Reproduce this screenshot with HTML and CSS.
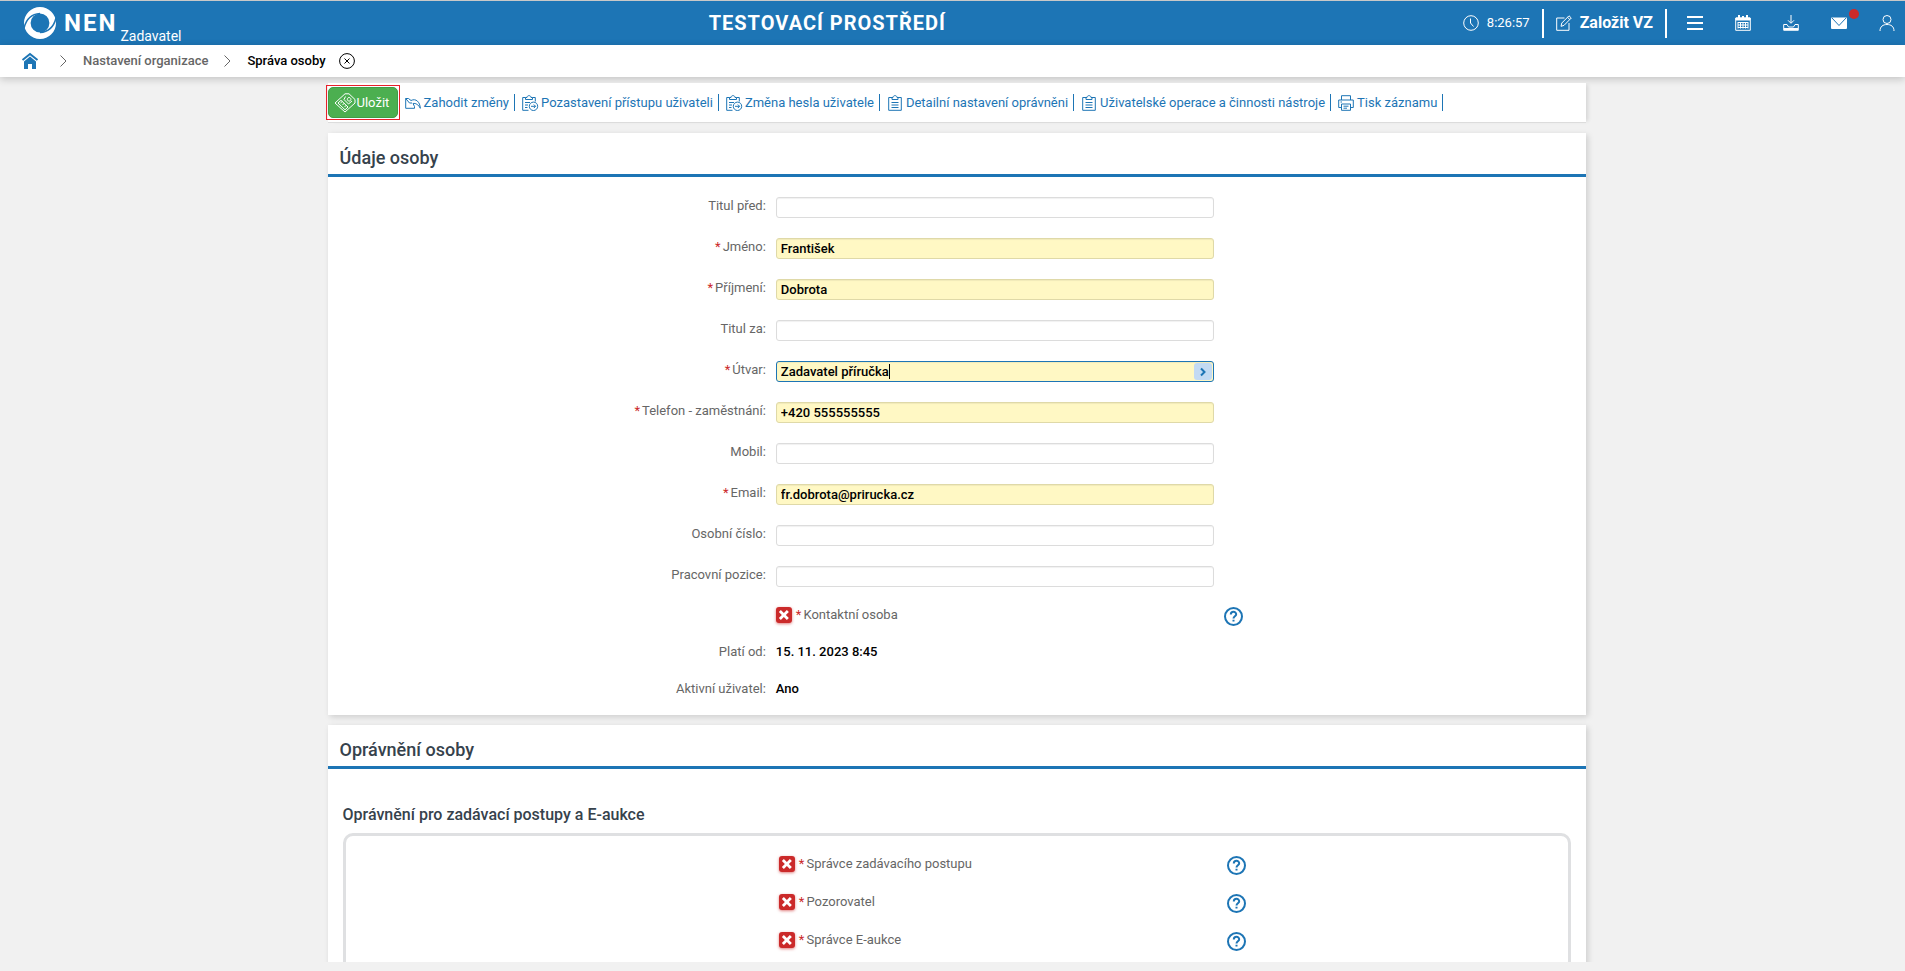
FILE: index.html
```html
<!DOCTYPE html>
<html lang="cs">
<head>
  <meta charset="UTF-8">
  <title>Správa osoby - NEN</title>
  <meta name="viewport" content="width=device-width, initial-scale=1.0">
  <link rel="stylesheet" href="styles.css">
</head>
<body>

  <header class="top-bar">
    <div class="brand">
      <svg class="brand-ring" viewBox="0 0 32 32">
        <circle cx="16" cy="16" r="12.700" fill="none" stroke="#fff" stroke-width="6.600"/>
        <path fill="none" stroke="#1d75b5" stroke-width="1.500" d="M0 21C2 13 7 7 16 6.500M32 11C30 19 25 25 16 25.500"/>
      </svg>
      <span class="brand-name">NEN</span>
      <span class="brand-role">Zadavatel</span>
    </div>
    <div class="env">TESTOVACÍ PROSTŘEDÍ</div>
    <div class="top-tools">
      <div class="clock">
        <svg class="icon" viewBox="0 0 16 16"><circle cx="8" cy="8" r="7.300"/><path d="M7.500 3.500V8L10.500 11.500"/></svg>
        <span>8:26:57</span>
      </div>
      <button class="new-vz">
        <svg class="icon" viewBox="0 0 16 16"><path d="M8.500 3H.700V15.300H13V8M5 11.300L5.800 8L13 .800L15.300 3L8 10.400ZM11.500 2.300L13.800 4.500"/></svg>
        Založit VZ
      </button>
      <nav class="top-icons">
        <button aria-label="Menu"><svg class="icon" viewBox="0 0 16 16"><path stroke-width="2" d="M0 2H16M0 8H16M0 14H16"/></svg></button>
        <button aria-label="Kalendář"><svg class="icon" viewBox="0 0 16 16"><path d="M.700 3H15.300V15.300H.700ZM3 7.500H13M3 10H13M3 12.500H13M3 7V13.500M5.500 7V13.500M8 7V13.500M10.500 7V13.500M13 7V13.500"/><path fill="#fff" d="M1 3H15V5H1Z"/><path stroke-width="2" d="M4 0V4M8 1V4M12 0V4"/></svg></button>
        <button aria-label="Stažené soubory"><svg class="icon" viewBox="0 0 16 16"><path d="M8 0V8M5 5.300L8 8.300L11 5.300M.700 9.500H4L5.500 12H10.500L12 9.500H15.300V15.300H.700Z"/><path stroke-width="2" d="M1 14H15"/></svg></button>
        <button class="mail" aria-label="Zprávy"><svg class="icon" viewBox="0 0 16 16"><rect x="0" y="2.500" width="16" height="11.500" rx="1" fill="#fff" stroke="none"/><path stroke="#1d75b5" d="M1 3L8 10.500L15 3"/></svg><span class="dot"></span></button>
        <button aria-label="Uživatel"><svg class="icon" viewBox="0 0 16 16"><circle cx="8" cy="4.500" r="4"/><path d="M1 16C1 11.500 4 9.500 8 9.500S15 11.500 15 16"/></svg></button>
      </nav>
    </div>
  </header>

  <nav class="breadcrumb">
    <a href="#" class="home" aria-label="Domů">
      <svg viewBox="0 0 16 16"><path fill="none" stroke="#1d75b5" stroke-width="2" d="M.500 7L8 1L15.500 7"/><path fill="#1d75b5" d="M2 8.500L8 3.500L14 8.500V16H10V11H6V16H2Z"/></svg>
    </a>
    <svg class="sep" viewBox="0 0 7 12"><path d="M.500 .500L6 6L.500 11.500"/></svg>
    <a href="#">Nastavení organizace</a>
    <svg class="sep" viewBox="0 0 7 12"><path d="M.500 .500L6 6L.500 11.500"/></svg>
    <span class="current">Správa osoby</span>
    <button class="close" aria-label="Zavřít">
      <svg viewBox="0 0 16 16"><circle cx="8" cy="8" r="7.400"/><path d="M5.500 5.500L10.500 10.500M10.500 5.500L5.500 10.500"/></svg>
    </button>
  </nav>

  <main class="page">
    <div class="toolbar">
      <button class="save">
        <svg viewBox="0 0 22 20"><path d="M1 10L11 .800H15L21 6.500V10L11 19ZM4 10L7 7.300L14 14L11 16.800ZM11.500 3.500L10 6.500L14.500 11L18 8M15 4.500A1.800 1.800 0 1 0 15.200 4.500M6.500 10L8.500 8.300M8.500 12L10.500 10M10.500 14L12.500 12"/></svg>
        Uložit
      </button>
      <button class="tool">
        <svg class="icon" viewBox="0 0 16 16"><path d="M3.500 3.500H.700V13.300H9.500V11.500M.700 3.500L4.500 8H7M3.500 3.500L6 5.500C11 3 15 7 15.300 13.300C13.500 9.500 10.500 8 8 8.500L9.500 11.500"/></svg>
        Zahodit změny
      </button>
      <button class="tool">
        <svg class="icon" viewBox="0 0 16 16"><path d="M6.500 15.300H.700V2.500H3.500M10.500 2.500H13.300V6.500M3.500 4.500V2.500H5C5 0 9 0 9 2.500H10.500V4.500ZM3 7.500H8M3 10H6M3 12.500H5.500"/><circle cx="11.500" cy="11.300" r="4.200"/><path d="M9 11.300H13.500M11.800 9.500L13.600 11.300L11.800 13.100"/></svg>
        Pozastavení přístupu uživateli
      </button>
      <button class="tool">
        <svg class="icon" viewBox="0 0 16 16"><path d="M6.500 15.300H.700V2.500H3.500M10.500 2.500H13.300V6.500M3.500 4.500V2.500H5C5 0 9 0 9 2.500H10.500V4.500ZM3 7.500H8M3 10H6M3 12.500H5.500"/><circle cx="11.500" cy="11.300" r="4.200"/><path d="M9 11.300H13.500M11.800 9.500L13.600 11.300L11.800 13.100"/></svg>
        Změna hesla uživatele
      </button>
      <button class="tool">
        <svg class="icon" viewBox="0 0 16 16"><path d="M5 2.500H1.700V15.300H14.300V2.500H11M5 4.500V2.500H6C6 0 10 0 10 2.500H11V4.500ZM4.500 7.500H11.500M4.500 10H11.500M4.500 12.500H11.500"/></svg>
        Detailní nastavení oprávněni
      </button>
      <button class="tool">
        <svg class="icon" viewBox="0 0 16 16"><path d="M5 2.500H1.700V15.300H14.300V2.500H11M5 4.500V2.500H6C6 0 10 0 10 2.500H11V4.500ZM4.500 7.500H11.500M4.500 10H11.500M4.500 12.500H11.500"/></svg>
        Uživatelské operace a činnosti nástroje
      </button>
      <button class="tool">
        <svg class="icon" viewBox="0 0 16 16"><path d="M3.500 5V.700H12.500V5M3.500 12.500H.700V5H15.300V12.500H12.500M3.500 9H12.500V15.300H3.500ZM5.500 11.200H10.500M5.500 13.200H9M2.500 7H4"/></svg>
        Tisk záznamu
      </button>
    </div>

    <section class="card">
      <h2>Údaje osoby</h2>
      <form class="form">
        <div class="row">
          <label for="titulPred">Titul před:</label>
          <input type="text" id="titulPred">
        </div>
        <div class="row">
          <label for="jmeno"><i>*</i>Jméno:</label>
          <input type="text" id="jmeno" class="required" value="František">
        </div>
        <div class="row">
          <label for="prijmeni"><i>*</i>Příjmení:</label>
          <input type="text" id="prijmeni" class="required" value="Dobrota">
        </div>
        <div class="row">
          <label for="titulZa">Titul za:</label>
          <input type="text" id="titulZa">
        </div>
        <div class="row">
          <label for="utvar"><i>*</i>Útvar:</label>
          <div class="lookup">
            <input type="text" id="utvar" class="required active" value="Zadavatel příručka">
            <span class="caret"></span>
            <button type="button" aria-label="Vybrat útvar"><svg viewBox="0 0 6 8"><path d="M1 .500L4.500 4L1 7.500"/></svg></button>
          </div>
        </div>
        <div class="row">
          <label for="telefon"><i>*</i>Telefon - zaměstnání:</label>
          <input type="text" id="telefon" class="required" value="+420 555555555">
        </div>
        <div class="row">
          <label for="mobil">Mobil:</label>
          <input type="text" id="mobil">
        </div>
        <div class="row">
          <label for="email"><i>*</i>Email:</label>
          <input type="text" id="email" class="required" value="fr.dobrota@prirucka.cz">
        </div>
        <div class="row">
          <label for="cislo">Osobní číslo:</label>
          <input type="text" id="cislo">
        </div>
        <div class="row">
          <label for="pozice">Pracovní pozice:</label>
          <input type="text" id="pozice">
        </div>
        <div class="row check-row">
          <div class="check">
            <input type="checkbox" id="kontaktni">
            <label for="kontaktni"><i>*</i>Kontaktní osoba</label>
          </div>
          <button type="button" class="help" aria-label="Nápověda"><svg viewBox="0 0 19 19"><circle cx="9.500" cy="9.500" r="8.500"/><path d="M6.800 7.500C6.800 4 12.200 4 12.200 7.300C12.200 9.300 9.500 9.300 9.500 11.500M9.500 12.800V14.600"/></svg></button>
        </div>
        <div class="row">
          <span class="label">Platí od:</span>
          <span class="value">15. 11. 2023 8:45</span>
        </div>
        <div class="row">
          <span class="label">Aktivní uživatel:</span>
          <span class="value">Ano</span>
        </div>
      </form>
    </section>

    <section class="card">
      <h2>Oprávnění osoby</h2>
      <div class="group">
        <h3>Oprávnění pro zadávací postupy a E-aukce</h3>
        <div class="group-box">
          <div class="row check-row">
            <div class="check">
              <input type="checkbox" id="spravcePostupu">
              <label for="spravcePostupu"><i>*</i>Správce zadávacího postupu</label>
            </div>
            <button type="button" class="help" aria-label="Nápověda"><svg viewBox="0 0 19 19"><circle cx="9.500" cy="9.500" r="8.500"/><path d="M6.800 7.500C6.800 4 12.200 4 12.200 7.300C12.200 9.300 9.500 9.300 9.500 11.500M9.500 12.800V14.600"/></svg></button>
          </div>
          <div class="row check-row">
            <div class="check">
              <input type="checkbox" id="pozorovatel">
              <label for="pozorovatel"><i>*</i>Pozorovatel</label>
            </div>
            <button type="button" class="help" aria-label="Nápověda"><svg viewBox="0 0 19 19"><circle cx="9.500" cy="9.500" r="8.500"/><path d="M6.800 7.500C6.800 4 12.200 4 12.200 7.300C12.200 9.300 9.500 9.300 9.500 11.500M9.500 12.800V14.600"/></svg></button>
          </div>
          <div class="row check-row">
            <div class="check">
              <input type="checkbox" id="spravceAukce">
              <label for="spravceAukce"><i>*</i>Správce E-aukce</label>
            </div>
            <button type="button" class="help" aria-label="Nápověda"><svg viewBox="0 0 19 19"><circle cx="9.500" cy="9.500" r="8.500"/><path d="M6.800 7.500C6.800 4 12.200 4 12.200 7.300C12.200 9.300 9.500 9.300 9.500 11.500M9.500 12.800V14.600"/></svg></button>
          </div>
        </div>
      </div>
    </section>
  </main>

</body>
</html>
```

FILE: styles.css
```css
* {
  box-sizing: border-box;
}
body {
  font-family: Roboto, "Liberation Sans", sans-serif;
  font-size: 13px;
  line-height: 16px;
  color: #666;
  background: #f1f1f1;
  margin: 0;
  height: 100vh;
  display: flex;
  flex-direction: column;
}
button {
  font: inherit;
  color: inherit;
  background: none;
  border: none;
  padding: 0;
  cursor: pointer;
}
svg {
  display: block;
  flex: none;
  overflow: visible;
}
.icon {
  width: 16px;
  height: 16px;
  fill: none;
  stroke: currentColor;
}

/* header */
.top-bar {
  flex: none;
  height: 45px;
  border-top: 1px solid #c8c8c8;
  background: #1d75b5;
  color: #fff;
  display: flex;
  align-items: center;
}
.brand {
  width: 37.2%;
  padding-left: 24px;
  display: flex;
  align-items: center;
}
.brand-ring {
  width: 32px;
  height: 32px;
}
.brand-name {
  font-size: 24px;
  line-height: 32px;
  font-weight: 700;
  letter-spacing: 2px;
  margin-left: 8px;
}
.brand-role {
  font-size: 14px;
  align-self: flex-end;
  margin-left: 3px;
  line-height: 6px;
}
.env {
  font-size: 20px;
  font-weight: 700;
  letter-spacing: 1px;
  white-space: nowrap;
}
.top-tools {
  margin-left: auto;
  display: flex;
  align-items: center;
  padding-right: 10px;
}
.clock {
  display: flex;
  align-items: center;
  gap: 8px;
  padding-right: 12px;
}
.new-vz {
  display: flex;
  align-items: center;
  gap: 8px;
  height: 29px;
  padding: 0 12px;
  border-left: 2px solid #fff;
  border-right: 2px solid #fff;
  font-size: 16px;
  font-weight: 700;
}
.top-icons {
  display: flex;
  gap: 32px;
  padding-left: 20px;
}
.mail {
  position: relative;
}
.dot {
  position: absolute;
  top: -6px;
  right: -12px;
  width: 10px;
  height: 10px;
  border-radius: 50%;
  background: #cb2a2a;
}

/* breadcrumb */
.breadcrumb {
  flex: none;
  height: 32px;
  padding-left: 22px;
  background: #fff;
  box-shadow: 0 2px 8px rgba(0, 0, 0, 0.2);
  display: flex;
  align-items: center;
  font-weight: 500;
}
.breadcrumb a {
  color: #666;
  text-decoration: none;
}
.home svg,
.close svg {
  width: 16px;
  height: 16px;
}
.sep {
  width: 7px;
  height: 12px;
  margin: 0 16px;
  fill: none;
  stroke: #666;
}
.home + .sep {
  margin-left: 22px;
}
.breadcrumb .current {
  color: #000;
}
.close {
  margin-left: 13px;
}
.close svg {
  fill: none;
  stroke: #000;
}

/* content */
.page {
  flex: 1;
  min-height: 0;
  overflow: hidden;
  margin: 6px 0 9px;
  padding-left: 9px;
  display: flex;
  flex-direction: column;
  align-items: center;
  gap: 10px;
}
.toolbar {
  flex: none;
  width: 66.4%;
  height: 40px;
  padding-top: 4px;
  background: #fff;
  border-bottom: 1px solid #dcdcdc;
  box-shadow: 4px 0 4px -2px rgba(0, 0, 0, 0.12);
  display: flex;
  align-items: flex-start;
  color: #1d75b5;
}
.save {
  position: relative;
  display: flex;
  align-items: center;
  width: 70px;
  height: 31px;
  padding-left: 5px;
  border: 1px solid #419b45;
  border-radius: 5px;
  background: #4caf50;
  color: #fff;
  white-space: nowrap;
}
.save svg {
  width: 22px;
  height: 20px;
  margin-right: 1px;
  fill: none;
  stroke: #fff;
}
.save::after {
  content: "";
  position: absolute;
  inset: -3px;
  border: 1px solid #e8202a;
}
.tool {
  display: flex;
  align-items: center;
  gap: 3px;
  height: 17px;
  margin-top: 7px;
  padding: 0 5px 0 7px;
  border-right: 1px solid #1d75b5;
  white-space: nowrap;
}
.card {
  flex: none;
  width: 66.4%;
  background: #fff;
  box-shadow: 2px 2px 6px rgba(0, 0, 0, 0.15);
}
h2 {
  margin: 0;
  padding: 15px 12px 6px;
  border-bottom: 3px solid #1d75b5;
  font-size: 18px;
  line-height: 20px;
  font-weight: 500;
  color: #36424c;
}
.form {
  padding: 20px 0 18px;
  display: flex;
  flex-direction: column;
  gap: 20px;
}
.row {
  display: grid;
  grid-template-columns: 438fr 438fr 362fr;
  column-gap: 10px;
  align-items: start;
}
.row > label,
.label {
  text-align: right;
  padding-top: 1px;
}
label i {
  color: #cb2a2a;
  font-style: normal;
  margin-right: 2px;
}
.value {
  padding-top: 1px;
  color: #000;
  font-weight: 500;
}
input[type="text"] {
  width: 100%;
  height: 21px;
  padding: 0 4px;
  border: 1px solid #dcdcdc;
  border-radius: 3px;
  background: #fff;
  box-shadow: inset 0 1px 1px rgba(0, 0, 0, 0.06);
  font: inherit;
  font-weight: 500;
  color: #000;
}
input[type="text"].required {
  background: #fff8c4;
  border-color: #dfd9a8;
}
input[type="text"].active {
  border-color: #1d75b5;
}
.lookup {
  position: relative;
  display: flex;
}
.lookup button {
  position: absolute;
  top: 2px;
  right: 2px;
  width: 18px;
  height: 17px;
  border-radius: 3px;
  background: #c3daf3;
  display: flex;
  align-items: center;
  justify-content: center;
}
.lookup button svg {
  width: 6px;
  height: 8px;
  fill: none;
  stroke: #1d75b5;
  stroke-width: 2;
}
.caret {
  position: absolute;
  top: 3px;
  left: 113px;
  width: 1px;
  height: 15px;
  background: #000;
}
.check-row {
  height: 16px;
}
.check {
  grid-column: 2;
  display: flex;
  gap: 4px;
}
input[type="checkbox"] {
  appearance: none;
  width: 16px;
  height: 16px;
  margin: 0;
  border-radius: 3px;
  background: #cb2a2a;
  box-shadow: 0 1px 3px rgba(203, 42, 42, 0.6);
  display: grid;
  place-items: center;
}
input[type="checkbox"]::before {
  content: "";
  width: 10px;
  height: 10px;
  background: #fff;
  clip-path: polygon(20% 0, 50% 30%, 80% 0, 100% 20%, 70% 50%, 100% 80%, 80% 100%, 50% 70%, 20% 100%, 0 80%, 30% 50%, 0 20%);
}
.help {
  width: 19px;
  height: 19px;
}
.help svg {
  width: 19px;
  height: 19px;
  fill: none;
  stroke: #1d75b5;
  stroke-width: 2;
}
.group {
  padding: 36px 15px 0;
}
h3 {
  margin: 0 0 8px;
  font-size: 16px;
  line-height: 20px;
  font-weight: 500;
  color: #36424c;
}
.group-box {
  border: 3px solid #dfe0e2;
  border-radius: 10px;
  padding: 20px 0;
  display: flex;
  flex-direction: column;
  gap: 22px;
}
.group-box .row {
  grid-template-columns: 423fr 438fr 341fr;
}
```
